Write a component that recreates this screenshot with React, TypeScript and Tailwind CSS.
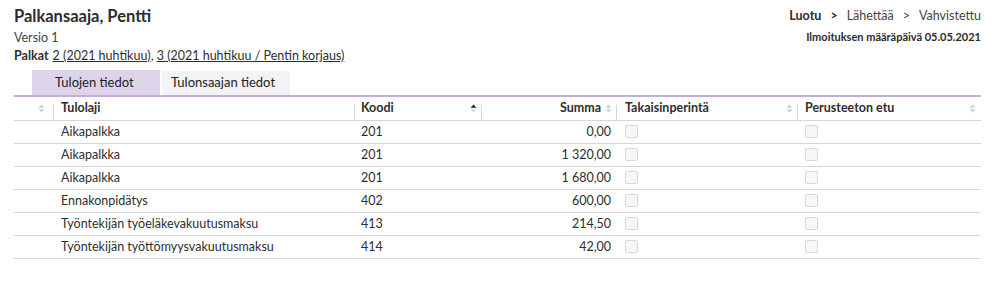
import React from 'react';

type Row = { laji: string; koodi: string; summa: string };

const rows: Row[] = [
    { laji: 'Aikapalkka', koodi: '201', summa: '0,00' },
    { laji: 'Aikapalkka', koodi: '201', summa: '1 320,00' },
    { laji: 'Aikapalkka', koodi: '201', summa: '1 680,00' },
    { laji: 'Ennakonpidätys', koodi: '402', summa: '600,00' },
    { laji: 'Työntekijän työeläkevakuutusmaksu', koodi: '413', summa: '214,50' },
    { laji: 'Työntekijän työttömyysvakuutusmaksu', koodi: '414', summa: '42,00' },
];

function SortIcon({ active }: { active?: boolean }) {
    return (
        <svg width="7" height="9" viewBox="0 0 7 9" className="shrink-0">
            <path d="M3.5 0.5 L6.5 3.8 L0.5 3.8 Z" fill={active ? '#222' : '#cfcfcf'} />
            <path d="M3.5 8.5 L6.5 5.2 L0.5 5.2 Z" fill={active ? '#d9d9d9' : '#cfcfcf'} />
        </svg>
    );
}

function Sep() {
    return <span className="absolute right-0 bottom-0 h-[15px] w-px bg-[#d6d6d6]"></span>;
}

function Checkbox() {
    return <span className="block h-[13px] w-[13px] rounded-[2px] border border-[#d8d8d8] bg-[#f7f7f7]"></span>;
}

export default function App() {
    return (
        <div className="min-h-[290px] w-[996px] bg-white pl-[14px] pr-[15px] pt-[5px] text-[#2e2e2e] font-['Lato','Noto_Sans',sans-serif]">
            <div className="flex justify-between">
                <div>
                    <h1 className="text-[16.5px] font-bold leading-[22px] text-[#2b2b2b]">Palkansaaja, Pentti</h1>
                    <div className="mt-[3px] text-[12.5px] leading-[16px] text-[#444]">Versio 1</div>
                    <div className="mt-[2px] text-[12.5px] leading-[16px]">
                        <span className="mr-[4px] font-bold">Palkat</span>
                        <a className="underline">2 (2021 huhtikuu)</a>,{' '}
                        <a className="underline">3 (2021 huhtikuu / Pentin korjaus)</a>
                    </div>
                </div>
                <div className="flex flex-col items-end">
                    <div className="flex items-center gap-[9px] text-[12.5px] leading-[22px] text-[#444]">
                        <span className="font-bold text-[#2b2b2b]">Luotu</span>
                        <span className="font-bold text-[#2b2b2b]">&gt;</span>
                        <span>Lähettää</span>
                        <span>&gt;</span>
                        <span>Vahvistettu</span>
                    </div>
                    <div className="mt-[2px] text-[11px] font-bold leading-[16px] text-[#2b2b2b]">
                        Ilmoituksen määräpäivä 05.05.2021
                    </div>
                </div>
            </div>

            <div className="mt-[6px] flex items-end pl-[18px]">
                <div className="flex h-[25px] w-[128px] items-center bg-[#ddd4ea] pl-[23px] text-[13px] text-[#222]">
                    Tulojen tiedot
                </div>
                <div className="ml-[2px] flex h-[24px] w-[128px] items-center bg-[#f3f3f3] pl-[9px] text-[13px] text-[#222]">
                    Tulonsaajan tiedot
                </div>
            </div>
            <div className="h-[2px] bg-[#c2aed8]"></div>

            <table className="w-full table-fixed border-collapse text-[12.5px] leading-[16px]">
                <colgroup>
                    <col className="w-[40px]" />
                    <col className="w-[301px]" />
                    <col className="w-[127px]" />
                    <col className="w-[135px]" />
                    <col className="w-[181px]" />
                    <col />
                </colgroup>
                <thead>
                    <tr className="h-[23px] border-b border-[#d6d6d6]">
                        <th className="relative pr-[9px]">
                            <div className="flex justify-end">
                                <SortIcon />
                            </div>
                            <Sep />
                        </th>
                        <th className="relative pl-[7px] text-left font-bold">
                            Tulolaji
                            <Sep />
                        </th>
                        <th className="relative pl-[6px] pr-[5px] font-bold">
                            <div className="flex items-center justify-between">
                                <span>Koodi</span>
                                <SortIcon active />
                            </div>
                            <Sep />
                        </th>
                        <th className="relative pr-[5px] font-bold">
                            <div className="flex items-center justify-end gap-[4px]">
                                <span>Summa</span>
                                <SortIcon />
                            </div>
                            <Sep />
                        </th>
                        <th className="relative pl-[8px] pr-[5px] font-bold">
                            <div className="flex items-center justify-between">
                                <span>Takaisinperintä</span>
                                <SortIcon />
                            </div>
                            <Sep />
                        </th>
                        <th className="pl-[7px] pr-[5px] font-bold">
                            <div className="flex items-center justify-between">
                                <span>Perusteeton etu</span>
                                <SortIcon />
                            </div>
                        </th>
                    </tr>
                </thead>
                <tbody>
                    {rows.map((r, i) => (
                        <tr key={i} className="h-[23px] border-b border-[#d6d6d6]">
                            <td></td>
                            <td className="pl-[7px]">{r.laji}</td>
                            <td className="pl-[6px]">{r.koodi}</td>
                            <td className="pr-[6px] text-right">{r.summa}</td>
                            <td className="pl-[8px]">
                                <Checkbox />
                            </td>
                            <td className="pl-[7px]">
                                <Checkbox />
                            </td>
                        </tr>
                    ))}
                </tbody>
            </table>
        </div>
    );
}
